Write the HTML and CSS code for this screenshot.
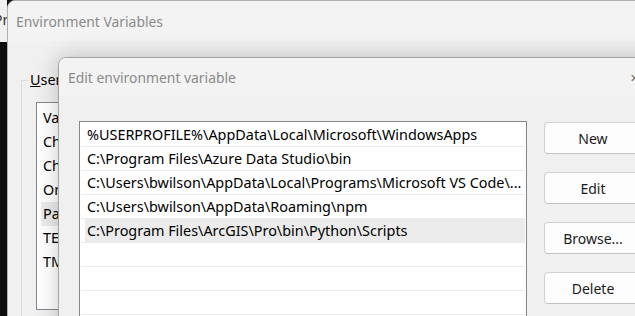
FILE: index.html
```html
<!DOCTYPE html>
<html>
<head>
	<meta charset="UTF-8">
	<title>Edit environment variable</title>
	<link rel="stylesheet" href="styles.css">
</head>
<body>
<div class="desk">
	<div class="backapp"><span class="backtext">Pr</span></div>

	<div class="win env">
		<div class="titlebar">Environment Variables</div>
		<div class="env-body">
			<fieldset class="group">
				<legend><u>U</u>ser variables for bwilson</legend>
				<ul class="varlist">
					<li>Variable</li>
					<li>ChocolateyLastPathUpdate</li>
					<li>ChocolateyToolsLocation</li>
					<li>OneDrive</li>
					<li class="sel">Path</li>
					<li>TEMP</li>
					<li>TMP</li>
				</ul>
			</fieldset>
		</div>
	</div>

	<div class="win edit">
		<div class="titlebar">
			<span class="title">Edit environment variable</span>
			<span class="close">&#x2715;</span>
		</div>
		<div class="edit-body">
			<ul class="pathlist">
				<li>%USERPROFILE%\AppData\Local\Microsoft\WindowsApps</li>
				<li>C:\Program Files\Azure Data Studio\bin</li>
				<li>C:\Users\bwilson\AppData\Local\Programs\Microsoft VS Code\...</li>
				<li>C:\Users\bwilson\AppData\Roaming\npm</li>
				<li class="sel">C:\Program Files\ArcGIS\Pro\bin\Python\Scripts</li>
				<li></li>
				<li></li>
				<li></li>
			</ul>
			<div class="buttons">
				<button>New</button>
				<button>Edit</button>
				<button>Browse...</button>
				<button>Delete</button>
			</div>
		</div>
	</div>
</div>
</body>
</html>
```

FILE: styles.css
```css
*{margin: 0;padding: 0;box-sizing: border-box;}
ul,li{list-style: none;}

body{font-family: "Noto Sans", "Liberation Sans", sans-serif;font-size: 14px;color: #000;background: #0d0d0d;}
.desk{position: relative;width: 635px;height: 316px;overflow: hidden;}

/* app peeking out behind the dialogs */
.backapp{position: absolute;left: 0;top: 0;width: 7px;height: 42px;background: #f0f0f0;overflow: hidden;}
.backapp .backtext{display: block;margin: 10px 0 0 -6px;color: #333;line-height: 20px;}

.win{position: absolute;border: 1px solid #b0b0b0;border-radius: 8px 8px 0 0;overflow: hidden;background: #f0f0f0;}
.titlebar{display: flex;align-items: center;background: #f3f3f3;color: #8a8a8a;font-size: 13.9px;}

/* Environment Variables (inactive, behind) */
.env{left: 7px;top: 0;width: 700px;height: 330px;}
.env .titlebar{height: 40px;padding-left: 8px;}
.env-body{padding: 0 0 0 13px;}
.group{margin-top: 30px;width: 300px;height: 260px;border: 1px solid #dcdcdc;padding: 13px 14px 0;}
.group legend{margin-left: -8px;padding: 0 2px;line-height: 18px;font-size: 14.4px;}
.varlist{height: 208px;border: 1px solid #828790;background: #fff;padding: 3px 0 0 4px;font-size: 14.4px;}
.varlist li{height: 24px;line-height: 24px;padding-left: 2px;white-space: nowrap;}
.varlist li.sel{background: #ebebeb;}

/* Edit environment variable (active, front) */
.edit{left: 58px;top: 57px;width: 600px;height: 300px;border-color: #a4a4a4;box-shadow: 0 0 22px rgba(0,0,0,.22);}
.edit .titlebar{height: 38px;padding-left: 9px;justify-content: space-between;}
.edit .close{width: 46px;text-align: center;font-size: 11px;color: #666;}
.edit-body{display: flex;gap: 17px;padding: 25px 0 0 20px;}
.pathlist{width: 448px;height: 220px;border: 1px solid #868686;background: #fff;padding: 1px 1px 0;flex-shrink: 0;font-size: 14.4px;}
.pathlist li{height: 24px;line-height: 23px;border-bottom: 1px solid #ebebeb;padding-left: 6px;white-space: nowrap;overflow: hidden;}
.pathlist li.sel{background: #ebebeb;box-shadow: inset 4px 0 0 #fff;}

.buttons{display: flex;flex-direction: column;gap: 18px;padding-top: 1px;}
.buttons button{width: 98px;height: 32px;border: 1px solid #d0d0d0;border-bottom-color: #c2c2c2;border-radius: 4px;background: #fdfdfd;font: inherit;color: #1b1b1b;}
```
